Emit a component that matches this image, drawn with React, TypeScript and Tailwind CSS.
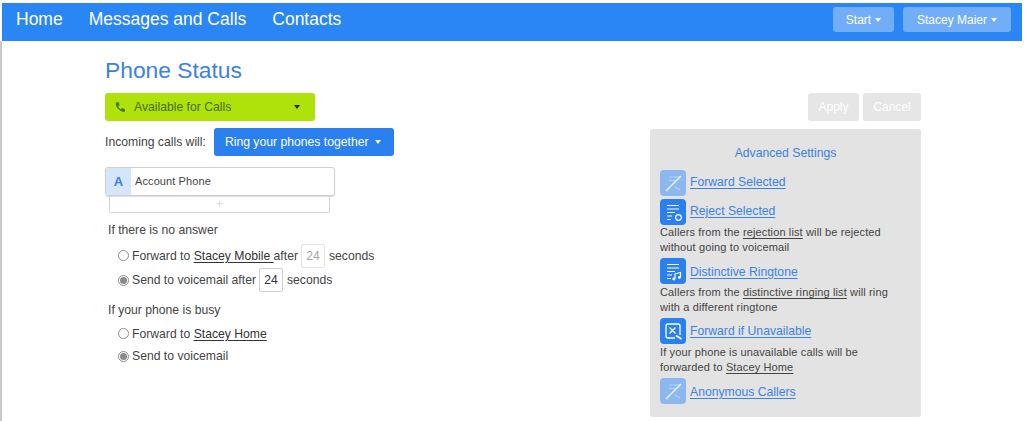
import React from "react";

const Caret = ({ className = "" }: { className?: string }) => (
  <span className={`inline-block w-0 h-0 border-x-[3.5px] border-x-transparent border-t-[4px] ${className}`} />
);

const Lines = () => (
  <path d="M6 5.500h12M6 9h12M6 12.500h8M6 16h5M6 19.500h4" stroke="white" strokeWidth="1.100" fill="none" />
);

const IconBox = ({ faded, children }: { faded?: boolean; children: React.ReactNode }) => (
  <span className={`flex h-[26px] w-[26px] shrink-0 items-center justify-center rounded-[4px] ${faded ? "bg-[#8cb8f0]" : "bg-[#2a80ee]"}`}>
    <svg width="24" height="24" viewBox="0 0 24 24">{children}</svg>
  </span>
);

const ForwardOff = () => (
  <>
    <path d="M8 6h11M8 9.500h8M14 16l5 3" stroke="#b7d0f3" strokeWidth="1.200" fill="none" />
    <path d="M5 20L20 5" stroke="#e6effb" strokeWidth="1.600" fill="none" />
  </>
);

const Radio = ({ checked }: { checked?: boolean }) => (
  <span className="flex h-[11px] w-[11px] shrink-0 items-center justify-center rounded-full border border-[#8d8d8d] bg-white">
    {checked && <span className="h-[7px] w-[7px] rounded-full bg-[#8a8a8a]" />}
  </span>
);

const NumBox = ({ muted }: { muted?: boolean }) => (
  <span className={`mx-[3px] flex h-[24px] w-[24px] items-center justify-center rounded-[2px] border ${muted ? "border-[#e2e2e2] text-[#a5a5a5]" : "border-[#cfcfcf] text-[#333]"}`}>24</span>
);

const Under = ({ children, className = "" }: { children: React.ReactNode; className?: string }) => (
  <span className={`underline underline-offset-2 ${className}`}>{children}</span>
);

const SettingLink = ({ icon, up, down, children }: { icon: React.ReactNode; up?: boolean; down?: boolean; children: React.ReactNode }) => (
  <div className="flex items-center gap-[4px]">
    {icon}
    <span className={`text-[#3b82e6] underline underline-offset-2 ${up ? "pb-[2px]" : ""} ${down ? "pt-[2px]" : ""}`}>{children}</span>
  </div>
);

const Desc = ({ children }: { children: React.ReactNode }) => (
  <p className="text-[11px] leading-[15px] tracking-[0.13px] text-[#444]">{children}</p>
);

export default function App() {
  return (
    <div className="flex h-[421px] w-full flex-col bg-white pt-[3px] font-['Liberation_Sans',Arial,sans-serif] text-[12.2px] text-[#444]">
      <nav className="ml-[2px] mr-[5px] flex h-[38px] shrink-0 items-center bg-[#2a85f5] pb-[5px] pl-[14px] pr-[11px] text-white">
        <div className="flex items-center gap-[26px] text-[17.5px]">
          <span>Home</span>
          <span>Messages and Calls</span>
          <span>Contacts</span>
        </div>
        <div className="ml-auto flex items-center gap-[9px] text-[12px]">
          <span className="flex h-[25px] w-[61px] items-center justify-center gap-[4px] rounded-[3px] bg-[#72aef8]">Start <Caret className="border-t-white" /></span>
          <span className="flex h-[25px] w-[108px] items-center justify-center gap-[4px] rounded-[3px] bg-[#72aef8]">Stacey Maier <Caret className="border-t-white" /></span>
        </div>
      </nav>

      <div className="flex min-h-0 flex-1 border-l-2 border-[#c9c9c9] pl-[103px]">
        <main className="flex w-[300px] shrink-0 flex-col">
          <h1 className="mt-[15px] text-[22.800px] leading-[28px] text-[#3b82dc]">Phone Status</h1>
          <div className="mt-[9px] flex h-[28px] w-[210px] items-center rounded-[3px] bg-[#aee20a] pl-[9px] pr-[15px] text-[#4d6a10]">
            <svg width="12" height="12" viewBox="0 0 24 24" className="mr-[8px]"><path d="M6 2l4 1 1 6-2.500 1.500c1 2.500 2.500 4.500 5 6L16 14l6 2 0 4c-1 2-3 2-5 1.500C10 19 5 13 3.500 7 3 4.500 4 3 6 2z" fill="#4a7a18" /></svg>
            <span>Available for Calls</span>
            <Caret className="ml-auto border-t-[#222]" />
          </div>
          <div className="mt-[7px] flex items-center gap-[8px]">
            <span>Incoming calls will:</span>
            <span className="flex h-[28px] w-[180px] items-center gap-[6px] whitespace-nowrap rounded-[3px] bg-[#2a80ee] pl-[11px] font-medium text-white">Ring your phones together <Caret className="border-t-white" /></span>
          </div>
          <div className="mt-[11px] flex h-[29px] w-[230px] items-stretch overflow-hidden rounded-[3px] border border-[#cfcfcf] shadow-[0_1px_1px_#ddd]">
            <span className="flex w-[25px] items-center justify-center bg-[#d5e6fb] text-[13px] font-bold text-[#3a80d8]">A</span>
            <span className="flex items-center pl-[4px] text-[11px] tracking-[0.1px] text-[#444]">Account Phone</span>
          </div>
          <div className="ml-[4px] flex h-[17px] w-[221px] items-center justify-center rounded-b-[2px] border border-t-0 border-[#d5d5d5] text-[12px] leading-none text-[#d8d8d8]">+</div>

          <div className="ml-[3px] mt-[8px]">If there is no answer</div>
          <div className="ml-[13px] mt-[4px] flex h-[25px] items-center whitespace-nowrap">
            <Radio />
            <span className="ml-[3px]">Forward to <Under className="text-[#333]">Stacey Mobile </Under>after</span>
            <NumBox muted />
            <span className="ml-[1px]">seconds</span>
          </div>
          <div className="ml-[13px] flex h-[24px] items-center whitespace-nowrap">
            <Radio checked />
            <span className="ml-[3px]">Send to voicemail after</span>
            <NumBox />
            <span className="ml-[1px]">seconds</span>
          </div>
          <div className="ml-[3px] mt-[9px]">If your phone is busy</div>
          <div className="ml-[13px] mt-[5px] flex items-center whitespace-nowrap">
            <Radio />
            <span className="ml-[3px]">Forward to <Under className="text-[#333]">Stacey Home</Under></span>
          </div>
          <div className="ml-[13px] mt-[4px] flex items-center whitespace-nowrap">
            <Radio checked />
            <span className="ml-[3px]">Send to voicemail</span>
          </div>
        </main>

        <aside className="ml-[245px] flex w-[271px] shrink-0 flex-col">
          <div className="mt-[52px] flex justify-end gap-[4px] text-[12px] font-medium text-white">
            <span className="flex h-[28px] w-[51px] items-center justify-center rounded-[3px] bg-[#e6e6e6]">Apply</span>
            <span className="flex h-[28px] w-[58px] items-center justify-center rounded-[3px] bg-[#e6e6e6]">Cancel</span>
          </div>
          <section className="mt-[8px] flex h-[288px] flex-col rounded-[3px] bg-[#e3e3e3] px-[10px] pt-[17px]">
            <h2 className="text-center leading-[14px] text-[#3b82dc]">Advanced Settings</h2>
            <div className="mt-[10px] flex flex-col gap-[3px]">
              <SettingLink up icon={<IconBox faded><ForwardOff /></IconBox>}>Forward Selected</SettingLink>
              <SettingLink up icon={<IconBox><Lines /><circle cx="17.500" cy="17.500" r="2.800" stroke="white" strokeWidth="1.200" fill="#2a80ee" /></IconBox>}>Reject Selected</SettingLink>
            </div>
            <div><Desc>Callers from the <Under>rejection list</Under> will be rejected<br />without going to voicemail</Desc></div>
            <div className="mt-[3px]">
              <SettingLink down icon={<IconBox><Lines /><path d="M14 20v-5l5.500-1.500v5" stroke="white" strokeWidth="1.200" fill="none" /><circle cx="12.800" cy="20" r="1.400" fill="white" /><circle cx="18.300" cy="18.500" r="1.400" fill="white" /></IconBox>}>Distinctive Ringtone</SettingLink>
            </div>
            <div className="mt-[1px]"><Desc>Callers from the <Under>distinctive ringing list</Under> will ring<br />with a different ringtone</Desc></div>
            <div className="mt-[3px]">
              <SettingLink icon={<IconBox><path d="M7 5h10a2 2 0 0 1 2 2v9M14 19H7a2 2 0 0 1-2-2V7a2 2 0 0 1 2-2" stroke="white" strokeWidth="1.300" fill="none" /><path d="M8.500 8.500l6 6M14.500 8.500l-6 6" stroke="white" strokeWidth="1.300" fill="none" /><path d="M15 16.500l5.500 3.500" stroke="white" strokeWidth="1.800" fill="none" /></IconBox>}>Forward if Unavailable</SettingLink>
            </div>
            <div className="mt-[1px]"><Desc>If your phone is unavailable calls will be<br />forwarded to <Under>Stacey Home</Under></Desc></div>
            <div className="mt-[3px]">
              <SettingLink down icon={<IconBox faded><ForwardOff /></IconBox>}>Anonymous Callers</SettingLink>
            </div>
          </section>
        </aside>
      </div>
    </div>
  );
}
